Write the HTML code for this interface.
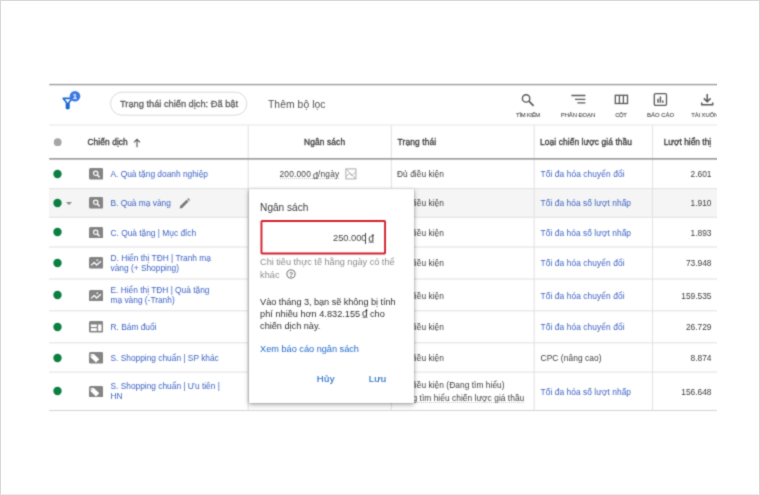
<!DOCTYPE html>
<html lang="vi">
<head>
<meta charset="utf-8">
<title>Ngân sách</title>
<style>
html,body{margin:0;padding:0;}
body{width:760px;height:495px;overflow:hidden;background:#fff;position:relative;font-family:"Liberation Sans",sans-serif;color:#444;}
#frame{position:absolute;left:0;top:0;width:758px;height:493px;border-top:1px solid #d8d8d8;border-left:1px solid #d8d8d8;border-right:1px solid #d8d8d8;border-bottom:1px solid #ececec;}
#app{position:absolute;left:1px;top:1px;width:716px;height:493px;overflow:hidden;background:#fff;filter:url(#sb);}
.a{position:absolute;}
.t{position:absolute;white-space:nowrap;}
.hl{position:absolute;left:49px;width:668px;height:1px;background:#e2e2e2;}
.vl{position:absolute;width:1px;background:#e2e2e2;top:125px;height:286px;}
.dot{position:absolute;width:8.6px;height:8.6px;border-radius:50%;background:#0b7f42;left:52.7px;}
.ico{position:absolute;left:89px;width:14.2px;height:11.6px;}
.tl{position:absolute;white-space:nowrap;color:#6a6a6a;}
</style>
</head>
<body>
<svg width="0" height="0" style="position:absolute"><defs><filter id="sb" x="0" y="0" width="100%" height="100%" color-interpolation-filters="sRGB"><feConvolveMatrix order="3" kernelMatrix="1 3 1 3 14 3 1 3 1" divisor="30" edgeMode="duplicate" preserveAlpha="true"/></filter></defs></svg>
<div id="frame"></div>
<div id="app"><div id="in" class="a" style="left:-1px;top:-1px;width:717px;height:495px;">
<svg class="a" style="left:58.700px;top:88px;" width="24" height="24" viewBox="0 0 24 24">
<path d="M4.2 10.4 L13.2 10.4 L9.9 14.6 L9.9 20.2 Q8.7 21.2 7.5 20.2 L7.5 14.6 Z" fill="none" stroke="#1b66d1" stroke-width="1.6" stroke-linejoin="round"/>
<path d="M7.5 14.8 L9.9 14.8 L9.9 20.4 L7.5 20.4 Z" fill="#1b66d1"/>
<circle cx="16" cy="8.2" r="5.3" fill="#3c79e6"/>
<text x="16" y="11" font-size="7.8" font-weight="bold" fill="#fff" text-anchor="middle" font-family="Liberation Sans, sans-serif">1</text>
</svg>
<div class="t" id="chip" style="left:120.0px;top:98.58px;font-size:9.3px;line-height:10px;color:#5c5c5c;-webkit-text-stroke:0.3px #5c5c5c;letter-spacing:-0.018px;">Trạng thái chiến dịch: Đã bật</div>
<div class="t" id="addf" style="left:268.0px;top:99.83px;font-size:10.3px;line-height:10px;color:#505050;letter-spacing:0.080px;">Thêm bộ lọc</div>
<svg class="a" style="left:520px;top:91.600px;" width="16" height="16" viewBox="0 0 16 16"><circle cx="6.1" cy="6.4" r="3.7" fill="none" stroke="#585858" stroke-width="1.4"/><path d="M8.9 9.200 L13.600 13.800" stroke="#585858" stroke-width="1.7"/></svg>
<svg class="a" style="left:570px;top:92px;" width="18" height="14" viewBox="0 0 18 14"><path d="M1.400 3.500h14M5 7.300h10.400M7.400 10.800h8" stroke="#585858" stroke-width="1.300" fill="none"/></svg>
<svg class="a" style="left:614px;top:94px;" width="16" height="12" viewBox="0 0 16 12"><rect x="1.300" y="1.300" width="12.200" height="8.200" fill="none" stroke="#585858" stroke-width="1.300"/><path d="M5.400 1v9M9.400 1v9" stroke="#585858" stroke-width="1.300"/></svg>
<svg class="a" style="left:653px;top:92px;" width="16" height="16" viewBox="0 0 16 16"><rect x="1.300" y="1.700" width="12.200" height="11.600" rx="1.300" fill="none" stroke="#585858" stroke-width="1.300"/><path d="M5 10.800V6.800M7.400 10.800V4.400M9.800 10.800V8.600" stroke="#585858" stroke-width="1.500"/></svg>
<svg class="a" style="left:700px;top:92px;" width="16" height="16" viewBox="0 0 16 16"><path d="M7.200 2v7.500M3.800 6.400 7.200 9.800l3.400-3.400M1.700 10.600v2.100h11v-2.100" fill="none" stroke="#585858" stroke-width="1.500"/></svg>
<div class="t" id="tl1" style="left:516.1px;top:109.76px;font-size:5.9px;line-height:10px;color:#4c4c4c;letter-spacing:-0.286px;-webkit-text-stroke:0.1px #4c4c4c;">TÌM KIẾM</div>
<div class="t" id="tl2" style="left:560.8px;top:109.76px;font-size:5.9px;line-height:10px;color:#4c4c4c;letter-spacing:-0.075px;-webkit-text-stroke:0.1px #4c4c4c;">PHÂN ĐOẠN</div>
<div class="t" id="tl3" style="left:615.3px;top:109.76px;font-size:5.9px;line-height:10px;color:#4c4c4c;letter-spacing:-0.450px;-webkit-text-stroke:0.1px #4c4c4c;">CỘT</div>
<div class="t" id="tl4" style="left:647.0px;top:109.76px;font-size:5.9px;line-height:10px;color:#4c4c4c;letter-spacing:0.033px;-webkit-text-stroke:0.1px #4c4c4c;">BÁO CÁO</div>
<div class="t" id="tl5" style="left:691.3px;top:109.76px;font-size:5.9px;line-height:10px;color:#4c4c4c;letter-spacing:-0.120px;-webkit-text-stroke:0.1px #4c4c4c;">TẢI XUỐNG</div>
<div class="a" style="left:49px;top:188.5px;width:668px;height:29px;background:#f5f5f5;"></div>
<svg class="a" style="left:52px;top:136px;" width="12" height="12" viewBox="0 0 12 12"><circle cx="5.700" cy="6.200" r="3.900" fill="#a6a6a6"/></svg>
<div class="t" id="h1" style="left:87.4px;top:137.39px;font-size:8.4px;line-height:10px;color:#3a3a3a;-webkit-text-stroke:0.3px #3a3a3a;letter-spacing:0.089px;">Chiến dịch</div>
<svg class="a" style="left:132px;top:137.800px;" width="10" height="10" viewBox="0 0 10 10"><path d="M5 9.200V1.500M2 4.400 5 1.400 8 4.400" fill="none" stroke="#5a5a5a" stroke-width="1.150"/></svg>
<div class="t" id="h2" style="left:304.0px;top:137.39px;font-size:8.4px;line-height:10px;color:#3a3a3a;-webkit-text-stroke:0.3px #3a3a3a;letter-spacing:0.125px;">Ngân sách</div>
<div class="t" id="h3" style="left:397.5px;top:137.39px;font-size:8.4px;line-height:10px;color:#3a3a3a;-webkit-text-stroke:0.3px #3a3a3a;letter-spacing:0.144px;">Trạng thái</div>
<div class="t" id="h4" style="left:540.0px;top:137.39px;font-size:8.4px;line-height:10px;color:#3a3a3a;-webkit-text-stroke:0.3px #3a3a3a;letter-spacing:0.096px;">Loại chiến lược giá thầu</div>
<div class="t" id="h5" style="left:663.7px;top:137.39px;font-size:8.4px;line-height:10px;color:#3a3a3a;-webkit-text-stroke:0.3px #3a3a3a;letter-spacing:0.008px;">Lượt hiển thị</div>
<svg class="a" style="left:0;top:0;" width="717" height="495" viewBox="0 0 717 495"><rect x="49" y="188.05" width="668" height="1.100" fill="#e3e3e3"/><rect x="49" y="216.65" width="668" height="1.100" fill="#e3e3e3"/><rect x="49" y="246.45" width="668" height="1.100" fill="#e3e3e3"/><rect x="49" y="278.45" width="668" height="1.100" fill="#e3e3e3"/><rect x="49" y="310.25" width="668" height="1.100" fill="#e3e3e3"/><rect x="49" y="342.25" width="668" height="1.100" fill="#e3e3e3"/><rect x="49" y="371.55" width="668" height="1.100" fill="#e3e3e3"/><rect x="49" y="409.95" width="668" height="1.100" fill="#d6d6d6"/><rect x="247.65" y="125" width="1.100" height="285.500" fill="#e3e3e3"/><rect x="390.85" y="125" width="1.100" height="285.500" fill="#e3e3e3"/><rect x="533.65" y="125" width="1.100" height="285.500" fill="#e3e3e3"/><rect x="651.95" y="125" width="1.100" height="285.500" fill="#e3e3e3"/><rect x="49.2" y="83.900" width="667.800" height="1.400" fill="#9b9b9b"/><rect x="49.2" y="85.300" width="667.800" height="0.800" fill="#e8e8e8"/><rect x="49.2" y="124.300" width="667.800" height="1.300" fill="#ebebeb"/><rect x="49.2" y="158" width="667.800" height="1.700" fill="#9e9e9e"/><rect x="110.500" y="92.200" width="136.300" height="23" rx="11.500" fill="none" stroke="#dadada" stroke-width="1"/></svg>
<svg class="a" style="left:52px;top:167.7px;" width="12" height="12" viewBox="0 0 12 12"><circle cx="5.5" cy="6" r="4.2" fill="#0b7f42"/></svg>
<svg class="a" style="left:52px;top:196.9px;" width="12" height="12" viewBox="0 0 12 12"><circle cx="5.5" cy="6" r="4.2" fill="#0b7f42"/></svg>
<svg class="a" style="left:52px;top:226.3px;" width="12" height="12" viewBox="0 0 12 12"><circle cx="5.5" cy="6" r="4.2" fill="#0b7f42"/></svg>
<svg class="a" style="left:52px;top:256.9px;" width="12" height="12" viewBox="0 0 12 12"><circle cx="5.5" cy="6" r="4.2" fill="#0b7f42"/></svg>
<svg class="a" style="left:52px;top:289.1px;" width="12" height="12" viewBox="0 0 12 12"><circle cx="5.5" cy="6" r="4.2" fill="#0b7f42"/></svg>
<svg class="a" style="left:52px;top:320.9px;" width="12" height="12" viewBox="0 0 12 12"><circle cx="5.5" cy="6" r="4.2" fill="#0b7f42"/></svg>
<svg class="a" style="left:52px;top:351.6px;" width="12" height="12" viewBox="0 0 12 12"><circle cx="5.5" cy="6" r="4.2" fill="#0b7f42"/></svg>
<svg class="a" style="left:52px;top:385.3px;" width="12" height="12" viewBox="0 0 12 12"><circle cx="5.5" cy="6" r="4.2" fill="#0b7f42"/></svg>
<div class="a" style="left:66px;top:201.500px;width:0;height:0;border-left:3.200px solid transparent;border-right:3.200px solid transparent;border-top:3.200px solid #8a8a8a;"></div>
<svg class="ico" style="top:168.2px;" viewBox="0 0 14.200 11.600"><rect x="0" y="0" width="14.200" height="11.600" rx="1.600" fill="#848484"/><circle cx="6.700" cy="5.300" r="2.200" fill="none" stroke="#fff" stroke-width="1.200"/><path d="M8.300 6.900 10.600 9.300" stroke="#fff" stroke-width="1.500"/></svg>
<svg class="ico" style="top:197.4px;" viewBox="0 0 14.200 11.600"><rect x="0" y="0" width="14.200" height="11.600" rx="1.600" fill="#848484"/><circle cx="6.700" cy="5.300" r="2.200" fill="none" stroke="#fff" stroke-width="1.200"/><path d="M8.300 6.900 10.600 9.300" stroke="#fff" stroke-width="1.500"/></svg>
<svg class="ico" style="top:226.8px;" viewBox="0 0 14.200 11.600"><rect x="0" y="0" width="14.200" height="11.600" rx="1.600" fill="#848484"/><circle cx="6.700" cy="5.300" r="2.200" fill="none" stroke="#fff" stroke-width="1.200"/><path d="M8.300 6.900 10.600 9.300" stroke="#fff" stroke-width="1.500"/></svg>
<svg class="ico" style="top:257.4px;" viewBox="0 0 14.200 11.600"><rect x="0" y="0" width="14.200" height="11.600" rx="1.600" fill="#848484"/><path d="M2.100 8.400 5.200 5.500 7.700 8 11.900 4.200" fill="none" stroke="#fff" stroke-width="1.300" stroke-linejoin="round"/><path d="M8.300 2.300v1.800M7.400 3.200h1.800" stroke="#fff" stroke-width="0.800"/></svg>
<svg class="ico" style="top:289.6px;" viewBox="0 0 14.200 11.600"><rect x="0" y="0" width="14.200" height="11.600" rx="1.600" fill="#848484"/><path d="M2.100 8.400 5.200 5.500 7.700 8 11.900 4.200" fill="none" stroke="#fff" stroke-width="1.300" stroke-linejoin="round"/><path d="M8.300 2.300v1.800M7.400 3.200h1.800" stroke="#fff" stroke-width="0.800"/></svg>
<svg class="ico" style="top:321.4px;" viewBox="0 0 14.200 11.600"><rect x="0" y="0" width="14.200" height="11.600" rx="1.600" fill="#848484"/><rect x="1.800" y="3.500" width="6" height="2.500" fill="#fff"/><rect x="1.800" y="7.100" width="6" height="2.800" fill="#fff"/><rect x="9.100" y="3.500" width="3.400" height="6.400" fill="#fff"/></svg>
<svg class="ico" style="top:352.1px;" viewBox="0 0 14.200 11.600"><rect x="0" y="0" width="14.200" height="11.600" rx="1.600" fill="#848484"/><path d="M1.600 2h3.200l5.500 5.200-3.300 3.200-5.400-5.200z" fill="#fff"/><circle cx="2.800" cy="3.200" r="0.550" fill="#848484"/></svg>
<svg class="ico" style="top:385.8px;" viewBox="0 0 14.200 11.600"><rect x="0" y="0" width="14.200" height="11.600" rx="1.600" fill="#848484"/><path d="M1.600 2h3.200l5.500 5.200-3.300 3.200-5.400-5.200z" fill="#fff"/><circle cx="2.800" cy="3.200" r="0.550" fill="#848484"/></svg>
<div class="t" id="c1" style="left:110.5px;top:169.29px;font-size:8.4px;line-height:10px;color:#3d62c4;letter-spacing:-0.013px;">A. Quà tặng doanh nghiệp</div>
<div class="t" id="c2" style="left:110.5px;top:198.49px;font-size:8.4px;line-height:10px;color:#3d62c4;letter-spacing:-0.013px;">B. Quà mạ vàng</div>
<div class="t" id="c3" style="left:110.5px;top:227.89px;font-size:8.4px;line-height:10px;color:#3d62c4;letter-spacing:-0.013px;">C. Quà tặng | Mục đích</div>
<div class="t" id="c4" style="left:110.5px;top:253.29px;font-size:8.4px;line-height:10px;color:#3d62c4;letter-spacing:-0.013px;">D. Hiển thị TĐH | Tranh mạ<br>vàng (+ Shopping)</div>
<div class="t" id="c5" style="left:110.5px;top:285.49px;font-size:8.4px;line-height:10px;color:#3d62c4;letter-spacing:-0.013px;">E. Hiển thị TĐH | Quà tặng<br>mạ vàng (-Tranh)</div>
<div class="t" id="c6" style="left:110.5px;top:322.49px;font-size:8.4px;line-height:10px;color:#3d62c4;letter-spacing:-0.013px;">R. Bám đuổi</div>
<div class="t" id="c7" style="left:110.5px;top:353.19px;font-size:8.4px;line-height:10px;color:#3d62c4;letter-spacing:-0.013px;">S. Shopping chuẩn | SP khác</div>
<div class="t" id="c8" style="left:110.5px;top:381.49px;font-size:8.4px;line-height:10px;color:#3d62c4;letter-spacing:-0.013px;">S. Shopping chuẩn | Ưu tiên |<br>HN</div>
<svg class="a" style="left:177.600px;top:196.900px;" width="13.200" height="13.200" viewBox="0 0 12 12"><path d="M1.500 10.500 2 8.200 7.800 2.400 9.600 4.200 3.800 10z" fill="#777"/><path d="M8.400 1.800 9.200 1 11 2.800 10.200 3.600z" fill="#777"/></svg>
<div class="t" id="b1" style="left:279.5px;top:170.29px;font-size:8.4px;line-height:8px;color:#3c3c3c;letter-spacing:0.177px;border-bottom:1px dotted #c6c6c6;">200.000 <span style="font-size:1.58em;line-height:0;position:relative;top:0.25em;margin:0 -0.09em 0 -0.1em;">₫</span>/ngày</div>
<svg class="a" style="left:345px;top:168px;" width="12" height="12" viewBox="0 0 12 12"><rect x="0.900" y="0.900" width="10" height="10" fill="none" stroke="#ababab" stroke-width="1"/><path d="M1 1 11 11M1 8.500 4.500 5.500 7 7.500 11 3.500" fill="none" stroke="#ababab" stroke-width="0.900"/></svg>
<div class="t" id="s1" style="left:397.0px;top:169.29px;font-size:8.4px;line-height:10px;color:#3c3c3c;letter-spacing:0.036px;">Đủ điều kiện</div>
<div class="t" id="s2" style="left:397.0px;top:198.49px;font-size:8.4px;line-height:10px;color:#3c3c3c;letter-spacing:0.036px;">Đủ điều kiện</div>
<div class="t" id="s3" style="left:397.0px;top:227.89px;font-size:8.4px;line-height:10px;color:#3c3c3c;letter-spacing:0.036px;">Đủ điều kiện</div>
<div class="t" id="s4" style="left:397.0px;top:258.49px;font-size:8.4px;line-height:10px;color:#3c3c3c;letter-spacing:0.036px;">Đủ điều kiện</div>
<div class="t" id="s5" style="left:397.0px;top:290.69px;font-size:8.4px;line-height:10px;color:#3c3c3c;letter-spacing:0.036px;">Đủ điều kiện</div>
<div class="t" id="s6" style="left:397.0px;top:322.49px;font-size:8.4px;line-height:10px;color:#3c3c3c;letter-spacing:0.036px;">Đủ điều kiện</div>
<div class="t" id="s7" style="left:397.0px;top:353.19px;font-size:8.4px;line-height:10px;color:#3c3c3c;letter-spacing:0.036px;">Đủ điều kiện</div>
<div class="t" id="s8" style="left:397.0px;top:379.59px;font-size:8.4px;line-height:10px;color:#3c3c3c;letter-spacing:0.036px;">Đủ điều kiện (Đang tìm hiểu)</div>
<div class="t" id="s9" style="left:397.0px;top:393.59px;font-size:8.4px;line-height:8px;color:#3c3c3c;letter-spacing:0.036px;border-bottom:1px dotted #c6c6c6;">Đang tìm hiểu chiến lược giá thầu</div>
<div class="t" id="g1" style="left:540.5px;top:169.29px;font-size:8.4px;line-height:10px;color:#3d62c4;letter-spacing:0.080px;">Tối đa hóa chuyển đổi</div>
<div class="t" id="g2" style="left:540.5px;top:198.49px;font-size:8.4px;line-height:10px;color:#3d62c4;letter-spacing:0.055px;">Tối đa hóa số lượt nhấp</div>
<div class="t" id="g3" style="left:540.5px;top:227.89px;font-size:8.4px;line-height:10px;color:#3d62c4;letter-spacing:0.055px;">Tối đa hóa số lượt nhấp</div>
<div class="t" id="g4" style="left:540.5px;top:258.49px;font-size:8.4px;line-height:10px;color:#3d62c4;letter-spacing:0.080px;">Tối đa hóa chuyển đổi</div>
<div class="t" id="g5" style="left:540.5px;top:290.69px;font-size:8.4px;line-height:10px;color:#3d62c4;letter-spacing:0.080px;">Tối đa hóa chuyển đổi</div>
<div class="t" id="g6" style="left:540.5px;top:322.49px;font-size:8.4px;line-height:10px;color:#3d62c4;letter-spacing:0.080px;">Tối đa hóa chuyển đổi</div>
<div class="t" id="g7" style="left:540.5px;top:353.19px;font-size:8.4px;line-height:10px;color:#3c3c3c;letter-spacing:0.080px;">CPC (nâng cao)</div>
<div class="t" id="g8" style="left:540.5px;top:386.89px;font-size:8.4px;line-height:10px;color:#3d62c4;letter-spacing:0.055px;">Tối đa hóa số lượt nhấp</div>
<div class="t" id="n1" style="right:5.5px;top:169.29px;font-size:8.4px;line-height:10px;color:#3c3c3c;">2.601</div>
<div class="t" id="n2" style="right:5.5px;top:198.49px;font-size:8.4px;line-height:10px;color:#3c3c3c;">1.910</div>
<div class="t" id="n3" style="right:5.5px;top:227.89px;font-size:8.4px;line-height:10px;color:#3c3c3c;">1.893</div>
<div class="t" id="n4" style="right:5.5px;top:258.49px;font-size:8.4px;line-height:10px;color:#3c3c3c;">73.948</div>
<div class="t" id="n5" style="right:5.5px;top:290.69px;font-size:8.4px;line-height:10px;color:#3c3c3c;">159.535</div>
<div class="t" id="n6" style="right:5.5px;top:322.49px;font-size:8.4px;line-height:10px;color:#3c3c3c;">26.729</div>
<div class="t" id="n7" style="right:5.5px;top:353.19px;font-size:8.4px;line-height:10px;color:#3c3c3c;">8.874</div>
<div class="t" id="n8" style="right:5.5px;top:386.89px;font-size:8.4px;line-height:10px;color:#3c3c3c;">156.648</div>
<div id="pop" class="a" style="left:248.700px;top:188.700px;width:165.300px;height:213.900px;background:#fff;box-shadow:0 0 2px rgba(0,0,0,.3),0 2px 5px rgba(0,0,0,.3);"></div>
<svg class="a" style="left:248px;top:186px;" width="168" height="5" viewBox="0 0 168 5"><rect x="0.700" y="2.050" width="165.300" height="1.100" fill="#dcdcdc"/></svg>
<div class="t" id="p1" style="left:260.1px;top:202.60px;font-size:10.1px;line-height:10px;color:#3a3a3a;">Ngân sách</div>
<svg class="a" style="left:258px;top:218px;" width="132" height="40" viewBox="0 0 132 40"><rect x="3.450" y="2.950" width="123.600" height="32.500" rx="0.700" fill="#fff" stroke="#d41f2b" stroke-width="1.900"/></svg>
<div class="t" id="p2" style="left:333.0px;top:232.94px;font-size:9.4px;line-height:10px;color:#444;letter-spacing:-0.067px;">250.000</div>
<div class="t" id="p2b" style="left:367.6px;top:234.85px;font-size:14.85px;line-height:10px;color:#3a3a3a;letter-spacing:-0.067px;">₫</div>
<div class="a" style="left:365px;top:232.500px;width:1px;height:11px;background:#444;"></div>
<div class="t" id="p3" style="left:260.1px;top:257.01px;font-size:9.2px;line-height:10px;color:#8c8c8c;letter-spacing:-0.028px;">Chi tiêu thực tế hằng ngày có thể</div>
<div class="t" id="p3b" style="left:260.1px;top:269.51px;font-size:9.2px;line-height:10px;color:#8c8c8c;">khác</div>
<svg class="a" style="left:286.100px;top:269.400px;" width="10" height="10" viewBox="0 0 10 10"><circle cx="5" cy="5" r="4.100" fill="none" stroke="#6e6e6e" stroke-width="1"/><text x="5" y="7.500" font-size="6.800" font-weight="bold" fill="#6e6e6e" text-anchor="middle" font-family="Liberation Sans, sans-serif">?</text></svg>
<div class="t" id="p4" style="left:260.1px;top:297.21px;font-size:9.2px;line-height:10px;color:#303030;letter-spacing:-0.059px;">Vào tháng 3, bạn sẽ không bị tính</div>
<div class="t" id="p4b" style="left:260.1px;top:308.81px;font-size:9.2px;line-height:10px;color:#303030;">phí nhiều hơn 4.832.155 <span style="font-size:1.58em;line-height:0;position:relative;top:0.25em;margin:0 -0.09em 0 -0.1em;">₫</span> cho</div>
<div class="t" id="p4c" style="left:260.1px;top:320.91px;font-size:9.2px;line-height:10px;color:#303030;letter-spacing:-0.021px;">chiến dịch này.</div>
<div class="t" id="p5" style="left:260.1px;top:343.91px;font-size:9.2px;line-height:10px;color:#1b68cc;letter-spacing:-0.010px;">Xem báo cáo ngân sách</div>
<div class="t" id="p6" style="left:316.7px;top:373.77px;font-size:9.6px;line-height:10px;color:#2a6fc6;-webkit-text-stroke:0.15px #2a6fc6;letter-spacing:0.450px;">Hủy</div>
<div class="t" id="p7" style="left:368.8px;top:373.77px;font-size:9.6px;line-height:10px;color:#2a6fc6;-webkit-text-stroke:0.15px #2a6fc6;letter-spacing:0.100px;">Lưu</div>
</div></div>
</body>
</html>
